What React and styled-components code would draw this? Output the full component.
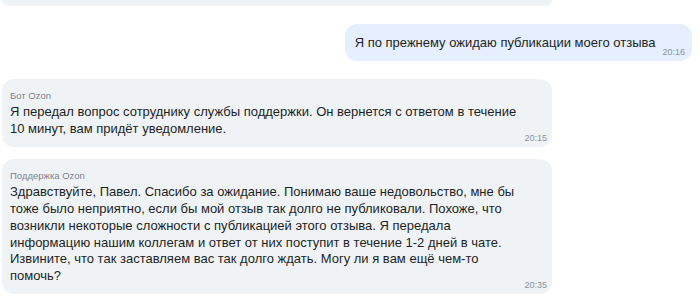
import React from "react";
import styled, { createGlobalStyle } from "styled-components";

const messages = [
  {
    id: 2,
    side: "out",
    lines: ["Я по прежнему ожидаю публикации моего отзыва"],
    time: "20:16",
  },
  {
    id: 3,
    side: "in",
    author: "Бот Ozon",
    lines: [
      "Я передал вопрос сотруднику службы поддержки. Он вернется с ответом в течение",
      "10 минут, вам придёт уведомление.",
    ],
    time: "20:15",
  },
  {
    id: 4,
    side: "in",
    author: "Поддержка Ozon",
    lines: [
      "Здравствуйте, Павел. Спасибо за ожидание. Понимаю ваше недовольство, мне бы",
      "тоже было неприятно, если бы мой отзыв так долго не публиковали. Похоже, что",
      "возникли некоторые сложности с публикацией этого отзыва. Я передала",
      "информацию нашим коллегам и ответ от них поступит в течение 1-2 дней в чате.",
      "Извините, что так заставляем вас так долго ждать. Могу ли я вам ещё чем-то",
      "помочь?",
    ],
    time: "20:35",
  },
];

function App() {
  let prevSide = "in";
  return (
    <>
      <GlobalStyle />
      <Chat>
        <Feed>
          {/* bottom edge of the previous message, scrolled out of view */}
          <ScrolledOff />
          {messages.map((m) => {
            const gap = prevSide === m.side ? 12 : 18;
            prevSide = m.side;
            if (m.side === "out") {
              return (
                <OutBubble key={m.id} $gap={gap}>
                  <OutText>{m.lines[0]}</OutText>
                  <Time>{m.time}</Time>
                </OutBubble>
              );
            }
            return (
              <InBubble key={m.id} $gap={gap}>
                <Author>{m.author}</Author>
                <Text>
                  {m.lines.map((l, j) => (
                    <Line key={j}>{l}</Line>
                  ))}
                </Text>
                <InTime>{m.time}</InTime>
              </InBubble>
            );
          })}
        </Feed>
      </Chat>
    </>
  );
}

const GlobalStyle = createGlobalStyle`
  body {
    margin: 0;
    background: #ffffff;
    font-family: "Liberation Sans", Arial, sans-serif;
    overflow: hidden;
  }
`;

const Chat = styled.div`
  width: 700px;
  height: 304px;
  overflow: hidden;
  background: #ffffff;
`;

const Feed = styled.div`
  display: flex;
  flex-direction: column;
  padding: 0 8px 0 2px;
`;

const ScrolledOff = styled.div`
  width: 550px;
  height: 6px;
  background: #f0f3f6;
  border-radius: 0 0 10px 10px;
`;

const InBubble = styled.div`
  align-self: flex-start;
  width: 550px;
  box-sizing: border-box;
  margin-top: ${(p) => p.$gap}px;
  padding: 10px 5px 3px 8px;
  background: #f0f3f6;
  border-radius: 12px;
  display: flex;
  flex-direction: column;
`;

const OutBubble = styled.div`
  align-self: flex-end;
  box-sizing: border-box;
  height: 37px;
  margin-top: ${(p) => p.$gap}px;
  padding: 10px 7px 3px 10px;
  background: #e6efff;
  border-radius: 12px;
  display: flex;
  align-items: flex-end;
  gap: 7px;
`;

const Author = styled.div`
  font-size: 9.5px;
  line-height: 13px;
  color: #7c8490;
  margin-bottom: 2px;
`;

const Text = styled.div`
  font-size: 13px;
  line-height: 16.9px;
  color: #1c1f24;
`;

const Line = styled.div`
  white-space: nowrap;
`;

const OutText = styled.div`
  font-size: 13px;
  line-height: 17px;
  color: #1c1f24;
  white-space: nowrap;
  margin-bottom: 7px;
`;

const Time = styled.div`
  font-size: 9px;
  line-height: 12px;
  color: #8a929c;
`;

const InTime = styled(Time)`
  align-self: flex-end;
  margin-top: -6px;
`;

export default App;
